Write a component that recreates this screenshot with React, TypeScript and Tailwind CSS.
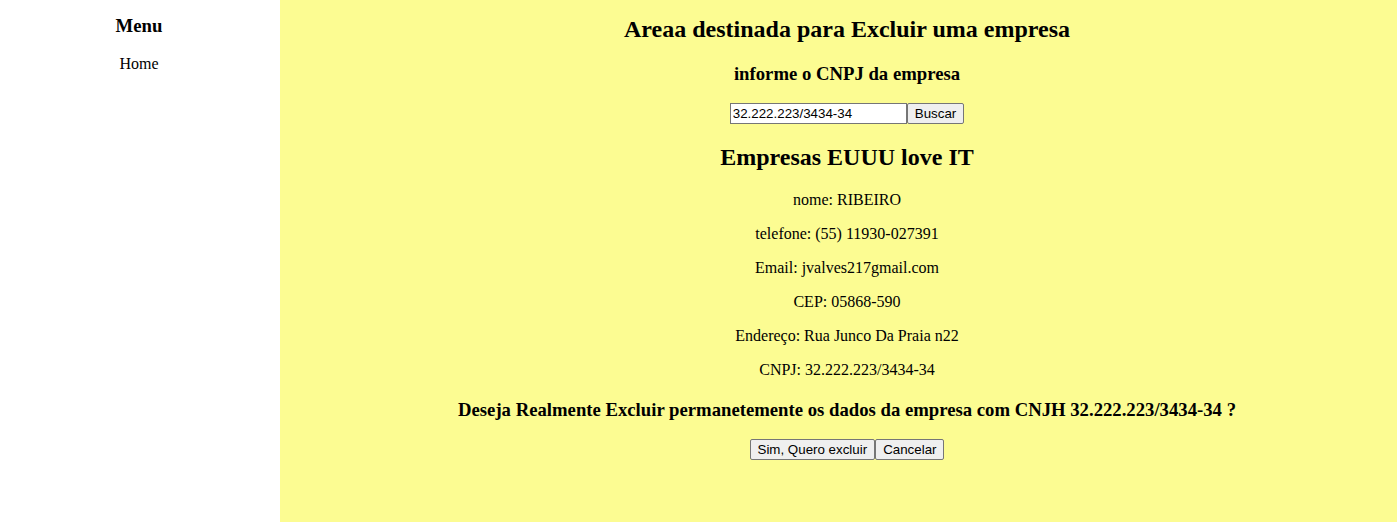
export default function App() {
  const btn =
    "bg-[#efefef] border border-[#767676] rounded-[2px] px-[7px] h-[21px] text-[13.33px] leading-[16px] text-black font-['Liberation_Sans',Arial,sans-serif]";
  return (
    <div className="flex min-h-[522px] font-['Liberation_Serif','Times_New_Roman',serif] text-black">
      <aside className="w-[280px] shrink-0 bg-white text-center pr-[2px]">
        <h3 className="text-[18.72px] font-bold mt-[15px] leading-[22px]">Menu</h3>
        <div className="mt-[18px] text-[16px] leading-[18px]">Home</div>
      </aside>
      <main className="flex-1 bg-[#fcfc92] pl-[17px] text-center">
        <h2 className="text-[24px] font-bold leading-[28px] mt-[15px]">Areaa destinada para Excluir uma empresa</h2>
        <h3 className="text-[18.72px] font-bold leading-[22px] mt-[20px]">informe o CNPJ da empresa</h3>
        <div className="mt-[18px] flex justify-center">
          <input
            defaultValue="32.222.223/3434-34"
            className="w-[177px] h-[21px] bg-white border border-[#767676] px-[2px] text-[13.33px] font-['Liberation_Sans',Arial,sans-serif] outline-none"
          />
          <button className={btn}>Buscar</button>
        </div>
        <h2 className="text-[24px] font-bold leading-[28px] mt-[19px]">Empresas EUUU love IT</h2>
        <div className="mt-[20px] flex flex-col gap-[16px] text-[16px] leading-[18px]">
          <p>nome: RIBEIRO</p>
          <p>telefone: (55) 11930-027391</p>
          <p>Email: jvalves217gmail.com</p>
          <p>CEP: 05868-590</p>
          <p>Endereço: Rua Junco Da Praia n22</p>
          <p>CNPJ: 32.222.223/3434-34</p>
        </div>
        <h3 className="text-[18.72px] font-bold leading-[22px] mt-[20px]">
          Deseja Realmente Excluir permanetemente os dados da empresa com CNJH 32.222.223/3434-34 ?
        </h3>
        <div className="mt-[18px] flex justify-center">
          <button className={btn}>Sim, Quero excluir</button>
          <button className={btn}>Cancelar</button>
        </div>
      </main>
    </div>
  );
}
